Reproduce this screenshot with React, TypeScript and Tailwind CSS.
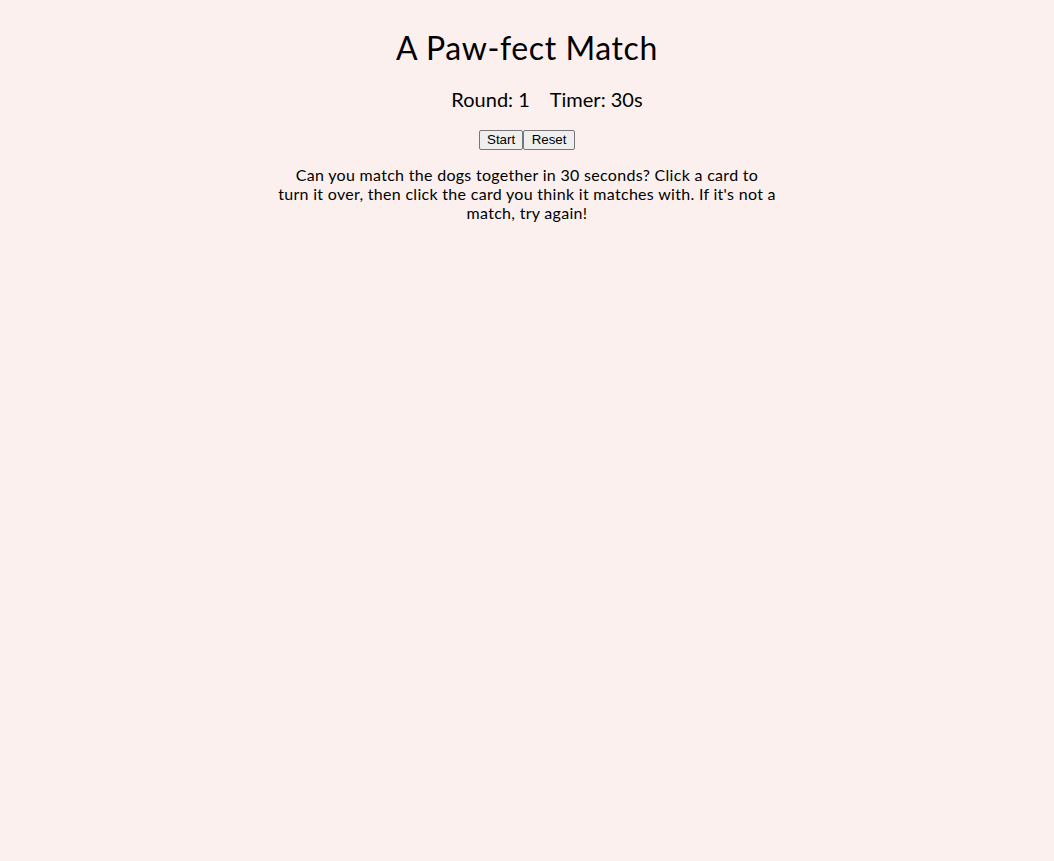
export default function App() {
  return (
    <div className="min-h-screen bg-[#fbf0ee] text-black font-['Lato','Open_Sans',sans-serif] flex flex-col items-center">
      <h1 className="mt-[29px] text-[32px] leading-[38px] tracking-[0.6px]">A Paw-fect Match</h1>
      <div className="mt-[20px] flex gap-[20px] pl-[40px] text-[20px] leading-[24px]">
        <span>Round: 1</span>
        <span>Timer: 30s</span>
      </div>
      <div className="mt-[19px] flex font-['Liberation_Sans',Arial,sans-serif] text-[13.33px]">
        <button className="h-[20px] px-[7px] bg-[#efefef] border border-[#767676] rounded-[2px] leading-none">Start</button>
        <button className="h-[20px] px-[7.5px] bg-[#efefef] border border-[#767676] rounded-[2px] leading-none">Reset</button>
      </div>
      <p className="mt-[15px] w-[520px] text-center text-[16px] leading-[19px] tracking-[0.3px]">
        Can you match the dogs together in 30 seconds? Click a card to
        <br />
        turn it over, then click the card you think it matches with. If it's not a match, try again!
      </p>
    </div>
  )
}
